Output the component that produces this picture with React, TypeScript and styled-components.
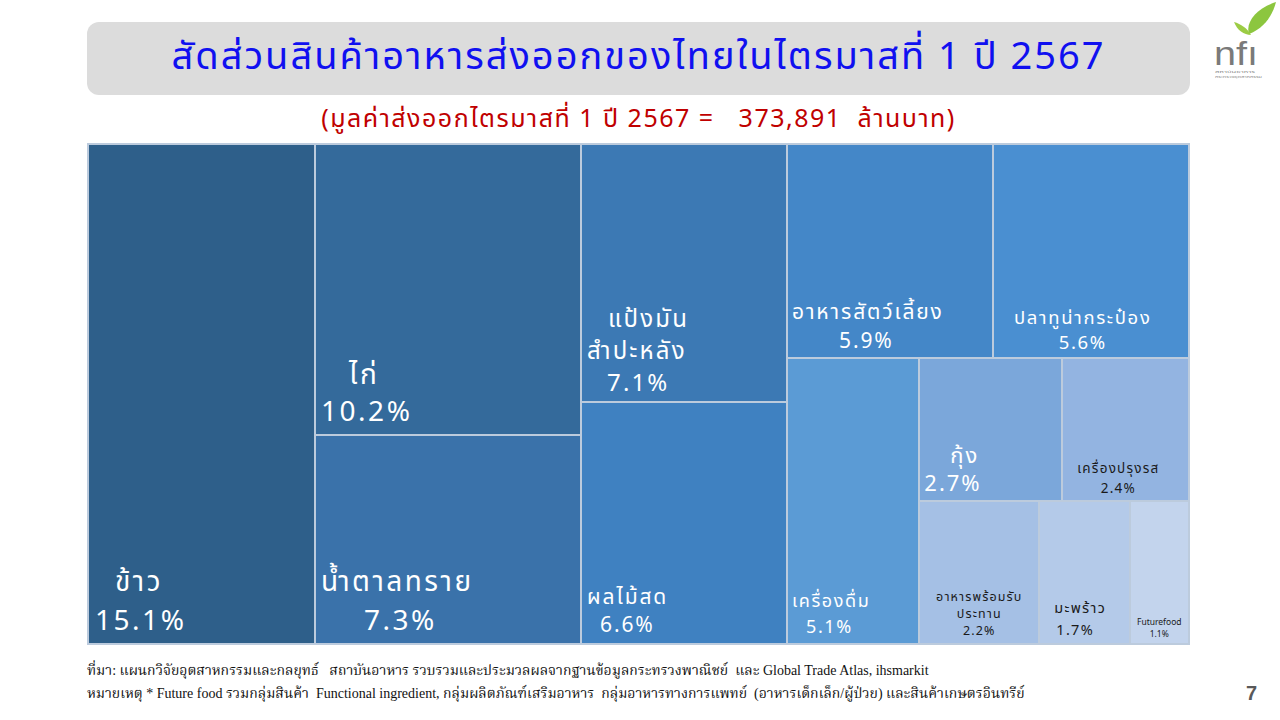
import React from 'react'
import styled, { createGlobalStyle } from 'styled-components'

const GlobalStyle = createGlobalStyle`
  html, body {
    margin: 0;
    padding: 0;
    background: #ffffff;
  }
`

const thaiSans = `Tahoma, "Noto Sans Thai", "Noto Sans", "DejaVu Sans", sans-serif`
const thaiSerif = `"Liberation Serif", "Noto Serif Thai", "Noto Sans Thai", serif`

const Page = styled.div`
  width: 1280px;
  height: 720px;
  box-sizing: border-box;
  padding-left: 87px;
  display: flex;
  flex-direction: column;
  font-family: ${thaiSans};
  overflow: hidden;
`

const Header = styled.div`
  display: flex;
  align-items: flex-start;
  height: 95px;
`

const TitleBox = styled.div`
  margin-top: 22px;
  width: 1103px;
  height: 73px;
  border-radius: 12px;
  background: #dcdcdc;
  display: flex;
  align-items: center;
  justify-content: center;
`

const Title = styled.h1`
  margin: 0 0 2px 0;
  font-family: ${thaiSans};
  font-weight: 400;
  font-size: 38px;
  letter-spacing: 2px;
  color: #1010f0;
`

const Logo = styled.svg`
  margin-left: 15px;
  flex-shrink: 0;
`

const Subtitle = styled.div`
  width: 1103px;
  height: 48px;
  display: flex;
  align-items: center;
  justify-content: center;
  font-size: 25px;
  letter-spacing: 1.5px;
  color: #c00000;
  white-space: pre;
`

const TreeMap = styled.div`
  width: 1103px;
  height: 502px;
  box-sizing: border-box;
  padding: 2px;
  gap: 2px;
  background: #bccbdd;
  display: flex;
`

const Stack = styled.div<{ $dir: 'row' | 'column'; $size: number }>`
  flex: ${(p) => p.$size} 1 0;
  display: flex;
  flex-direction: ${(p) => p.$dir};
  gap: 2px;
  min-width: 0;
  min-height: 0;
`

const Cell = styled.div<{ $size: number; $bg: string; $dark?: boolean; $center?: boolean }>`
  flex: ${(p) => p.$size} 1 0;
  background: ${(p) => p.$bg};
  color: ${(p) => (p.$dark ? '#1a1a1a' : '#ffffff')};
  display: flex;
  flex-direction: column;
  justify-content: flex-end;
  align-items: ${(p) => (p.$center ? 'center' : 'flex-start')};
  text-align: ${(p) => (p.$center ? 'center' : 'left')};
  min-width: 0;
  min-height: 0;
  overflow: hidden;
`

const Label = styled.div<{ $font: number; $line: number; $pad: string; $ls: number }>`
  padding: ${(p) => p.$pad};
  font-size: ${(p) => p.$font}px;
  line-height: ${(p) => p.$line}px;
  letter-spacing: ${(p) => p.$ls}em;
  white-space: nowrap;
`

const Line = styled.div<{ $indent?: number }>`
  padding-left: ${(p) => p.$indent ?? 0}px;
`

const Footer = styled.div`
  width: 1170px;
  padding-top: 16px;
  display: flex;
  flex-direction: column;
  gap: 4px;
  font-family: ${thaiSerif};
  font-size: 14px;
  color: #111111;
`

const FooterRow = styled.div`
  display: flex;
  align-items: center;
  justify-content: space-between;
  height: 19px;
  white-space: pre;
`

const PageNo = styled.span`
  font-family: "Liberation Sans", Arial, sans-serif;
  font-weight: 700;
  font-size: 20px;
  color: #595959;
`

type Item = {
  lines: [string, number?][]
  size: number
  bg: string
  font: number
  line: number
  pad: string
  ls?: number
  dark?: boolean
  center?: boolean
}

const Box = ({ item }: { item: Item }) => (
  <Cell $size={item.size} $bg={item.bg} $dark={item.dark} $center={item.center}>
    <Label $font={item.font} $line={item.line} $pad={item.pad} $ls={item.ls ?? 0.09}>
      {item.lines.map(([t, indent], i) => (
        <Line key={i} $indent={indent}>
          {t}
        </Line>
      ))}
    </Label>
  </Cell>
)

const rice: Item = { lines: [['ข้าว', 20], ['15.1%']], size: 225, bg: '#2e5f8a', font: 28, line: 39, pad: '0 0 2px 6px' }
const chicken: Item = { lines: [['ไก่', 28], ['10.2%']], size: 288, bg: '#346a9b', font: 28, line: 37, pad: '0 0 3px 5px' }
const sugar: Item = { lines: [['น้ำตาลทราย'], ['7.3%', 43]], size: 206, bg: '#3a72aa', font: 28, line: 39, pad: '0 0 2px 5px' }
const cassava: Item = { lines: [['แป้งมัน', 21], ['สำปะหลัง'], ['7.1%', 20]], size: 255, bg: '#3c79b4', font: 24, line: 32, pad: '0 0 1px 5px' }
const fruit: Item = { lines: [['ผลไม้สด'], ['6.6%', 13]], size: 239, bg: '#3f81c1', font: 21, line: 28, pad: '0 0 3px 5px' }
const petFood: Item = { lines: [['อาหารสัตว์เลี้ยง'], ['5.9%', 47]], size: 202, bg: '#4487c8', font: 21, line: 29, pad: '0 0 1px 4px' }
const tuna: Item = { lines: [['ปลาทูน่ากระป๋อง'], ['5.6%']], size: 193, bg: '#4a8fd1', font: 18.5, line: 25, pad: '0 16px 1px 0', center: true }
const drinks: Item = { lines: [['เครื่องดื่ม'], ['5.1%', 14]], size: 130, bg: '#5b9bd5', font: 18, line: 26, pad: '0 0 2px 4px' }
const shrimp: Item = { lines: [['กุ้ง', 26], ['2.7%']], size: 138, bg: '#7ba7da', font: 22, line: 28, pad: '0 0 1px 4px' }
const seasoning: Item = { lines: [['เครื่องปรุงรส'], ['2.4%']], size: 123, bg: '#93b4e1', font: 13.5, line: 20, pad: '0 14px 1px 0', center: true, dark: true }
const readyMeal: Item = { lines: [['อาหารพร้อมรับ'], ['ประทาน'], ['2.2%']], size: 115, bg: '#a5c0e5', font: 12.5, line: 17, pad: '0 0 3px 0', center: true, dark: true }
const coconut: Item = { lines: [['มะพร้าว'], ['1.7%', 2]], size: 86, bg: '#b4cae9', font: 14.5, line: 22, pad: '0 0 1px 14px', dark: true }
const future: Item = { lines: [['Futurefood'], ['1.1%']], size: 56, bg: '#c3d4ed', font: 8.5, line: 12, pad: '0 0 2px 0', ls: 0, center: true, dark: true }

const NfiLogo = () => (
  <Logo width="72" height="90" viewBox="0 0 72 90">
    <path d="M44 34 C 40 22, 52 8, 71 2 C 68 14, 60 28, 44 34 Z" fill="#8cc63f" />
    <path d="M46 35 C 42 28, 36 24, 29 22 C 32 30, 39 35, 46 35 Z" fill="#9ccc45" />
    <text
      x="9"
      y="65"
      fontFamily='"Liberation Sans", Arial, sans-serif'
      fontSize="34"
      fill="#7a7a7a"
      textLength="44"
      lengthAdjust="spacingAndGlyphs"
    >
      nfı
    </text>
    <text x="10" y="73" fontFamily={thaiSans} fontSize="4" fill="#8a8a8a" textLength="40" lengthAdjust="spacingAndGlyphs">
      สถาบันอาหาร
    </text>
    <text x="10" y="78" fontFamily={thaiSans} fontSize="4" fill="#8a8a8a" textLength="47" lengthAdjust="spacingAndGlyphs">
      กระทรวงอุตสาหกรรม
    </text>
  </Logo>
)

const App = () => (
  <Page>
    <GlobalStyle />
    <Header>
      <TitleBox>
        <Title>สัดส่วนสินค้าอาหารส่งออกของไทยในไตรมาสที่ 1 ปี 2567</Title>
      </TitleBox>
      <NfiLogo />
    </Header>
    <Subtitle>(มูลค่าส่งออกไตรมาสที่ 1 ปี 2567 =   373,891  ล้านบาท)</Subtitle>
    <TreeMap>
      <Box item={rice} />
      <Stack $dir="column" $size={264}>
        <Box item={chicken} />
        <Box item={sugar} />
      </Stack>
      <Stack $dir="column" $size={204}>
        <Box item={cassava} />
        <Box item={fruit} />
      </Stack>
      <Stack $dir="column" $size={400}>
        <Stack $dir="row" $size={211}>
          <Box item={petFood} />
          <Box item={tuna} />
        </Stack>
        <Stack $dir="row" $size={283}>
          <Box item={drinks} />
          <Stack $dir="column" $size={267}>
            <Stack $dir="row" $size={140}>
              <Box item={shrimp} />
              <Box item={seasoning} />
            </Stack>
            <Stack $dir="row" $size={139}>
              <Box item={readyMeal} />
              <Box item={coconut} />
              <Box item={future} />
            </Stack>
          </Stack>
        </Stack>
      </Stack>
    </TreeMap>
    <Footer>
      <FooterRow>
        <span>ที่มา: แผนกวิจัยอุตสาหกรรมและกลยุทธ์   สถาบันอาหาร รวบรวมและประมวลผลจากฐานข้อมูลกระทรวงพาณิชย์  และ Global Trade Atlas, ihsmarkit</span>
      </FooterRow>
      <FooterRow>
        <span>หมายเหตุ * Future food รวมกลุ่มสินค้า  Functional ingredient, กลุ่มผลิตภัณฑ์เสริมอาหาร  กลุ่มอาหารทางการแพทย์  (อาหารเด็กเล็ก/ผู้ป่วย) และสินค้าเกษตรอินทรีย์</span>
        <PageNo>7</PageNo>
      </FooterRow>
    </Footer>
  </Page>
)

export default App
